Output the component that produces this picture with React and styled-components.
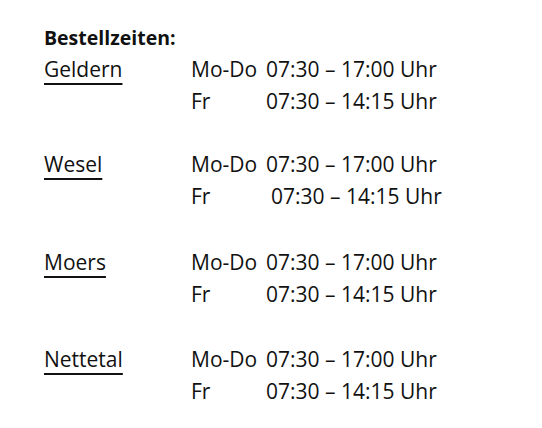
import React from 'react';
import styled, {createGlobalStyle} from 'styled-components';

const GlobalStyle = createGlobalStyle`
  html, body {
    margin: 0;
    padding: 0;
    background: #fff;
  }
  body {
    font-family: "Open Sans", Lato, "Liberation Sans", sans-serif;
    color: #111;
  }
`;

const Page = styled.div`
  width: 542px;
  height: 428px;
  box-sizing: border-box;
  padding: 25px 0 0 44px;
`;

const Title = styled.h1`
  margin: 0;
  font-size: 19.5px;
  font-weight: 700;
  line-height: 26px;
`;

const List = styled.div`
  display: flex;
  flex-direction: column;
  margin-top: 2px;
`;

const Branch = styled.div`
  display: grid;
  grid-template-columns: 147px 1fr;
  margin-top: ${p => p.$gap || 0}px;
  font-size: 21px;
  line-height: 32px;
`;

const City = styled.span`
  text-decoration: underline;
  text-decoration-thickness: 1.5px;
  text-underline-offset: 6px;
`;

const Hours = styled.div`
  display: flex;
  flex-direction: column;
`;

const Row = styled.div`
  display: grid;
  grid-template-columns: 75px auto;
`;

const Time = styled.span`
  padding-left: ${p => p.$shift || 0}px;
`;

const branches = [
  {name: 'Geldern', gap: 0},
  {name: 'Wesel', gap: 31, frShift: 5},
  {name: 'Moers', gap: 33.5},
  {name: 'Nettetal', gap: 33.5},
];

const App = () => (
  <>
    <GlobalStyle />
    <Page>
      <Title>Bestellzeiten:</Title>
      <List>
        {branches.map(b => (
          <Branch key={b.name} $gap={b.gap}>
            <div>
              <City>{b.name}</City>
            </div>
            <Hours>
              <Row>
                <span>Mo-Do</span>
                <Time>07:30 – 17:00 Uhr</Time>
              </Row>
              <Row>
                <span>Fr</span>
                <Time $shift={b.frShift}>07:30 – 14:15 Uhr</Time>
              </Row>
            </Hours>
          </Branch>
        ))}
      </List>
    </Page>
  </>
);

export default App;
